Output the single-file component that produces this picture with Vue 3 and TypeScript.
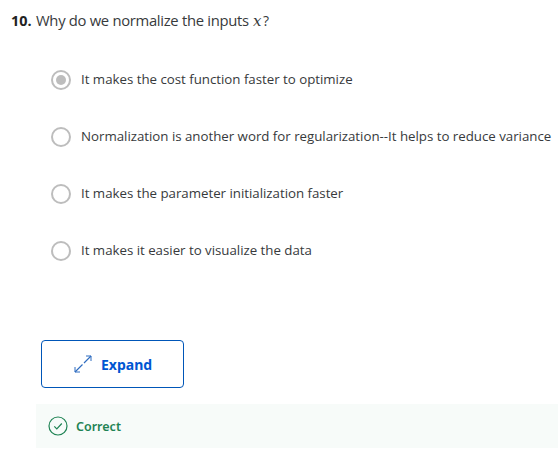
<script setup lang="ts">
import { ref } from 'vue'

const options: string[] = [
  'It makes the cost function faster to optimize',
  'Normalization is another word for regularization--It helps to reduce variance',
  'It makes the parameter initialization faster',
  'It makes it easier to visualize the data',
]
const selected = ref(0)
</script>

<template>
  <main class="quiz">
    <h1 class="question"><b class="number">10.</b><span class="prompt">Why do we normalize the inputs</span><i class="variable">x</i><span class="mark">?</span></h1>
    <ul class="options">
      <li v-for="(option, i) in options" :key="i" class="option" @click="selected = i">
        <span class="radio" :class="{ checked: selected === i }"></span>
        <span class="label">{{ option }}</span>
      </li>
    </ul>
    <button class="expand" type="button">
      <svg class="arrows" width="18" height="18" viewBox="0 0 18 18" fill="none" stroke="currentColor">
        <path d="M10 8L17 1M8.500 9.500L1 17" stroke-width="1.200" />
        <path d="M12 1h5v5M1 12v5h5" stroke-width="1" />
      </svg>
      <span class="expand-text">Expand</span>
    </button>
    <section class="feedback">
      <svg width="20" height="20" viewBox="0 0 20 20" fill="none" stroke="currentColor" stroke-width="1.2">
        <circle cx="10" cy="10" r="9" />
        <path d="M6.300 10.300l2.500 2.500L13.800 7.500" />
      </svg>
      <span class="feedback-text">Correct</span>
    </section>
  </main>
</template>

<style>
body {
  margin: 0;
  background: #fff;
}
</style>

<style scoped>
.quiz {
  height: 461px;
  overflow: hidden;
  font-family: "Noto Sans", sans-serif;
  color: #373a3c;
}
.question {
  display: flex;
  align-items: baseline;
  height: 24px;
  margin: 0;
  padding: 8px 0 18px 11px;
  font-family: "Open Sans", sans-serif;
  font-size: 14.800px;
  font-weight: 400;
  line-height: 24px;
  white-space: nowrap;
}
.number { width: 25px; font-size: 14.400px; color: #222; }
.prompt { width: 217px; letter-spacing: -0.300px; }
.variable {
  display: inline-block;
  width: 10px;
  font-family: "DejaVu Serif", "Liberation Serif", serif;
  font-size: 15px;
}
.mark { font-size: 14px; }
.options {
  margin: 0;
  padding: 1px 0 0 51px;
  list-style: none;
}
.option {
  display: flex;
  align-items: center;
  gap: 10px;
  height: 57px;
  font-family: "Open Sans", sans-serif;
  font-size: 13.300px;
  white-space: nowrap;
}
.label { padding-bottom: 2px; letter-spacing: -0.020px; }
.radio {
  box-sizing: border-box;
  flex: none;
  display: grid;
  place-items: center;
  width: 20px;
  height: 20px;
  border: 2px solid #bdbdbd;
  border-radius: 50%;
}
.radio.checked::after {
  content: "";
  width: 10px;
  height: 10px;
  border-radius: 50%;
  background: #bdbdbd;
}
.expand {
  box-sizing: border-box;
  display: flex;
  align-items: center;
  gap: 9px;
  width: 143px;
  height: 48px;
  margin: 61px 0 16px 41px;
  padding: 0 0 0 32px;
  border: 1px solid #0056b8;
  border-radius: 4px;
  background: #fff;
  color: #0056d2;
  font: 700 14px "Noto Sans", sans-serif;
}
.arrows { color: #2f6cc0; }
.feedback {
  display: flex;
  align-items: center;
  gap: 8px;
  height: 44px;
  margin-left: 36px;
  padding-left: 12px;
  background: #f7fbf9;
  color: #1f8354;
  font-size: 12.500px;
  font-weight: 600;
}
</style>
